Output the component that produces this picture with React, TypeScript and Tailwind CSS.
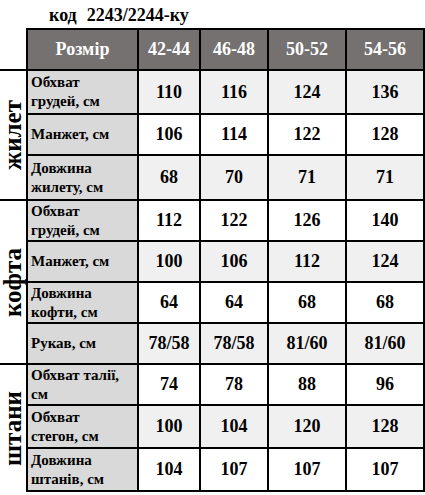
const cols = ["42-44", "46-48", "50-52", "54-56"];

type Row = { label: React.ReactNode; values: string[]; h: string };

const rows: Row[] = [
  { label: <>Обхват<br />грудей, см</>, values: ["110", "116", "124", "136"], h: "h-[42px]" },
  { label: "Манжет, см", values: ["106", "114", "122", "128"], h: "h-[39px]" },
  { label: <>Довжина<br />жилету, см</>, values: ["68", "70", "71", "71"], h: "h-[43px]" },
  { label: <>Обхват<br />грудей, см</>, values: ["112", "122", "126", "140"], h: "h-[39px]" },
  { label: "Манжет, см", values: ["100", "106", "112", "124"], h: "h-[39px]" },
  { label: <>Довжина<br />кофти, см</>, values: ["64", "64", "68", "68"], h: "h-[39px]" },
  { label: "Рукав, см", values: ["78/58", "78/58", "81/60", "81/60"], h: "h-[39px]" },
  { label: <>Обхват талії,<br />см</>, values: ["74", "78", "88", "96"], h: "h-[39px]" },
  { label: <>Обхват<br />стегон, см</>, values: ["100", "104", "120", "128"], h: "h-[41px]" },
  { label: <>Довжина<br />штанів, см</>, values: ["104", "107", "107", "107"], h: "h-[41px]" },
];

function Group({ name, h }: { name: string; h: string }) {
  return (
    <div className={`${h} border-t-2 border-black flex items-center justify-center`}>
      <span className="[writing-mode:vertical-rl] rotate-180 text-[25px] font-bold leading-[26px]">{name}</span>
    </div>
  );
}

export default function App() {
  return (
    <div className="w-[425px] h-[495px] bg-white text-black overflow-hidden font-['Liberation_Serif','DejaVu_Serif',serif]">
      {/* title */}
      <div className="h-[28px] pl-[49px] pt-[5px] text-[18px] font-bold leading-[21px]">
        код<span className="ml-[10px]">2243/2244-ку</span>
      </div>

      <div className="flex">
        {/* section names */}
        <div className="w-[26px] flex flex-col">
          <div className="h-[41px]" />
          <Group name="жилет" h="h-[130px]" />
          <Group name="кофта" h="h-[164px]" />
          <Group name="штани" h="h-[129px]" />
        </div>

        {/* table */}
        <div className="grid grid-cols-[109px_60px_66px_76px_76px] gap-[2px] p-[2px] bg-black font-bold">
          <div className="h-[39px] bg-[#767171] text-white text-[18px] flex items-center justify-center">Розмір</div>
          {cols.map((c) => (
            <div key={c} className="h-[39px] bg-[#767171] text-white text-[18px] flex items-center justify-center">{c}</div>
          ))}

          {rows.map((r, i) => {
            const bg = i % 2 === 0 ? "bg-[#f0f0f0]" : "bg-white";
            return [
              <div key={`l${i}`} className={`${r.h} bg-[#d9d9d9] pl-[3px] flex items-center text-[15px] leading-[19px]`}>
                <span>{r.label}</span>
              </div>,
              ...r.values.map((v, j) => (
                <div key={`v${i}-${j}`} className={`${r.h} ${bg} flex items-center justify-center text-[18px]`}>{v}</div>
              )),
            ];
          })}
        </div>
      </div>
    </div>
  );
}
